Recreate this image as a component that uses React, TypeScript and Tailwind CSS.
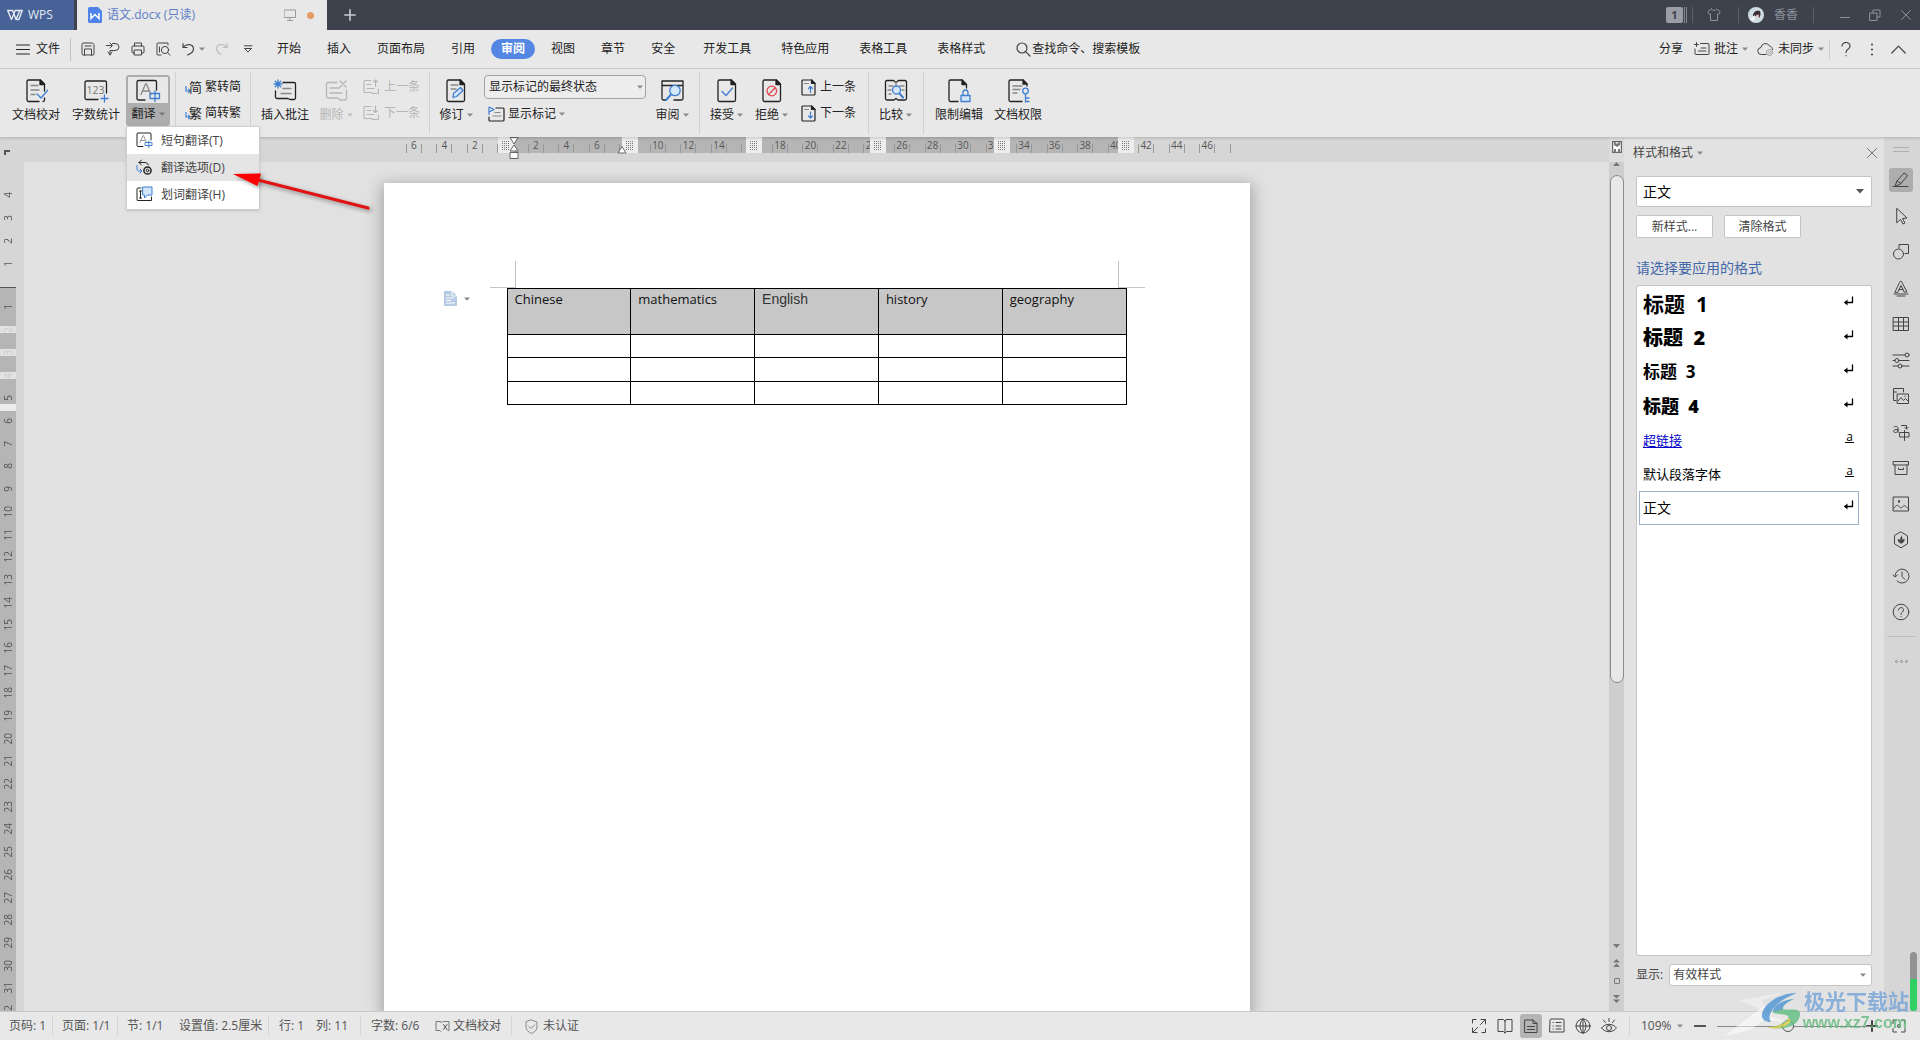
import type { ReactNode } from "react";

/* ---------- small building blocks ---------- */

type IconProps = { children: ReactNode; w?: number; h?: number; className?: string; sw?: number };

function Svg({ children, w = 24, h = 24, className = "", sw = 1 }: IconProps) {
  return (
    <svg
      width={w}
      height={h}
      viewBox={`0 0 ${w} ${h}`}
      fill="none"
      stroke="currentColor"
      strokeWidth={sw}
      strokeLinecap="round"
      strokeLinejoin="round"
      className={`shrink-0 ${className}`}
      aria-hidden="true"
    >
      {children}
    </svg>
  );
}

function Caret({ className = "text-[#8a8a8a]" }: { className?: string }) {
  return (
    <svg width="6" height="4" viewBox="0 0 6 4" className={`shrink-0 ${className}`} aria-hidden="true">
      <path d="M0 0.5h6L3 3.7z" fill="currentColor" />
    </svg>
  );
}

const BLUE = "#3f7fd0";
const PALE = "#d3e6fa";

function DocFrame({ open = false }: { open?: boolean }) {
  return (
    <>
      <path d={open ? "M12 23.500H4.500a1.500 1.500 0 0 1-1.500-1.500V3.500A1.500 1.500 0 0 1 4.500 2H16l4.500 4.500V10" : "M4.500 2H16.500L20.500 6V22a1.500 1.500 0 0 1-1.500 1.500H4.500A1.500 1.500 0 0 1 3 22V3.500A1.500 1.500 0 0 1 4.500 2z"} />
      <path d="M16 2l4.500 4.500H16z" fill="currentColor" />
    </>
  );
}

/* ---------- ribbon icons (24 x 25) ---------- */

const ProofIcon = () => (
  <Svg w={24} h={25} sw={1.3}>
    <path d="M15 23.500H4.500A1.500 1.500 0 0 1 3 22V3.500A1.500 1.500 0 0 1 4.500 2H16.500L20.500 6V13M20.500 20v2a1.500 1.500 0 0 1-1.500 1.500" />
    <path d="M16 2l4.500 4.500H16z" fill="currentColor" />
    <path d="M7 7.500h7M7 12h8M7 16.500h4" stroke="#888" />
    <path d="M13 16l4 4 7-8" stroke={BLUE} />
  </Svg>
);
const CountIcon = () => (
  <Svg w={26} h={25} sw={1.3}>
    <path d="M15 21.500H3.500A1.500 1.500 0 0 1 2 20V4.500A1.500 1.500 0 0 1 3.500 3H22a1.500 1.500 0 0 1 1.500 1.500V15" />
    <text x="12.500" y="16" textAnchor="middle" fontSize="10.500" fontFamily="Open Sans" fill="#777" stroke="none">123</text>
    <path d="M21.500 17v7M18 20.500h7" stroke={BLUE} />
  </Svg>
);
const TranslateIcon = () => (
  <Svg w={26} h={25} sw={1.3}>
    <path d="M10 22H3.500A1.500 1.500 0 0 1 2 20.500V4A1.500 1.500 0 0 1 3.500 2.500H20A1.500 1.500 0 0 1 21.500 4V12" />
    <path d="M6 16.500L10.500 6h1L16 16.500M7.500 13h7" stroke="#888" />
    <path d="M15 15.500h9.500v5H15zM20 13v10.500" stroke={BLUE} />
  </Svg>
);
const InsertCommentIcon = () => (
  <Svg w={26} h={25} sw={1.3}>
    <path d="M11 4.500H22A1.500 1.500 0 0 1 23.500 6V20A1.500 1.500 0 0 1 22 21.500H18l-2-1H5A1.500 1.500 0 0 1 3.500 19V13" />
    <path d="M11 10.500h8M9 15.500h10" stroke="#888" />
    <path d="M6 2v8M2 6h8M3.200 3.200l5.600 5.600M8.800 3.200L3.200 8.800" stroke={BLUE} />
  </Svg>
);
const DeleteCommentIcon = () => (
  <Svg w={26} h={25} sw={1.3}>
    <path d="M14 4.500H5A1.500 1.500 0 0 0 3.500 6V18.500A1.500 1.500 0 0 0 5 20h10l2 2h5a1.500 1.500 0 0 0 1.500-1.500V12M7 10h9M7 15h12M17 3l6 6M23 3l-6 6" />
  </Svg>
);
const ReviseIcon = () => (
  <Svg w={24} h={25} sw={1.3}>
    <DocFrame />
    <path d="M7 7h7M7 11h5" stroke="#888" />
    <path d="M9.500 15.500l7-6 2.500 3-6.500 6-3.500 1z" stroke={BLUE} fill={PALE} />
  </Svg>
);
const ReviewPaneIcon = () => (
  <Svg w={26} h={25} sw={1.3}>
    <path d="M7 22H4.500A1.500 1.500 0 0 1 3 20.500V3H24V20.500a1.500 1.500 0 0 1-1.500 1.500H15M3 7.500h21" />
    <circle cx="16" cy="12.500" r="5.200" stroke={BLUE} fill={PALE} />
    <path d="M12 16.500l-5 5.500" stroke={BLUE} strokeWidth="2" />
  </Svg>
);
const AcceptIcon = () => (
  <Svg w={24} h={25} sw={1.3}>
    <DocFrame />
    <path d="M7 13.500l4 4 6.500-7.500" stroke={BLUE} />
  </Svg>
);
const RejectIcon = () => (
  <Svg w={24} h={25} sw={1.3}>
    <DocFrame />
    <circle cx="11.800" cy="13" r="4.800" stroke="#e0464e" />
    <path d="M8.500 16.500l6.800-6.800" stroke="#e0464e" />
  </Svg>
);
const CompareIcon = () => (
  <Svg w={26} h={25} sw={1.3}>
    <path d="M10.500 2.500H4A1.500 1.500 0 0 0 2.500 4V20.500A1.500 1.500 0 0 0 4 22h7l2-1.500 2 1.500h7a1.500 1.500 0 0 0 1.500-1.500V4A1.500 1.500 0 0 0 22 2.500h-6.500L13 4.500z" />
    <path d="M13 4v3M6 8h4M5 12h3M17 8h4M19 12h2M6 16h2" stroke="#888" />
    <circle cx="13.500" cy="12" r="4" stroke={BLUE} fill={PALE} />
    <path d="M16.500 15.500l3.500 4" stroke={BLUE} strokeWidth="2" />
  </Svg>
);
const RestrictIcon = () => (
  <Svg w={26} h={25} sw={1.3}>
    <DocFrame open />
    <path d="M15 17.500h9v6h-9z" stroke={BLUE} fill={PALE} />
    <path d="M17 17v-2.500a2.500 2.500 0 0 1 5 0V17" stroke={BLUE} />
  </Svg>
);
const RightsIcon = () => (
  <Svg w={26} h={25} sw={1.3}>
    <path d="M17 23.500H5.500A1.500 1.500 0 0 1 4 22V3.500A1.500 1.500 0 0 1 5.500 2H18l4 4v2" />
    <path d="M18 2l4 4h-4z" fill="currentColor" />
    <path d="M8 8h9M8 11.500h7M8 15h4" stroke="#888" />
    <circle cx="20.500" cy="13" r="2.800" stroke={BLUE} />
    <path d="M20.500 16v8M20.500 20h3.500M20.500 23.500h3.500" stroke={BLUE} />
  </Svg>
);
const NavComment = ({ down }: { down?: boolean }) => (
  <Svg w={17} h={16} sw={1.1}>
    <path d="M8 1.500H2A1 1 0 0 0 1 2.500v10A1 1 0 0 0 2 13.500h6l2 1h4.500a1 1 0 0 0 1-1V10M4 5.500h4M4 9.500h7" />
    <path d={down ? "M12.500 1v6M10.500 5.500l2 2 2-2" : "M12.500 7.500v-6M10.500 3l2-2 2 2"} />
  </Svg>
);
const NavChange = ({ down }: { down?: boolean }) => (
  <Svg w={15} h={17} sw={1.2}>
    <path d="M2 1H10.500l3.500 3.500V15a1 1 0 0 1-1 1H2a1 1 0 0 1-1-1V2a1 1 0 0 1 1-1z" />
    <path d="M10.500 1v3.500H14z" fill="currentColor" />
    <path d="M3.500 4.500h4" stroke="#888" />
    <path d={down ? "M9.500 7v6M7.500 11l2 2 2-2" : "M9.500 13.500v-6M7.500 9.500l2-2 2 2"} stroke={BLUE} />
  </Svg>
);
const MarkupIcon = () => (
  <Svg w={17} h={16} sw={1.2}>
    <path d="M8 2h7a1 1 0 0 1 1 1v11a1 1 0 0 1-1 1H2a1 1 0 0 1-1-1v-3" />
    <path d="M1 8.500V1l5 2.500-5 2.500" stroke={BLUE} />
    <path d="M7 6.500h5M5 10h8" stroke="#888" />
  </Svg>
);
const ConvertIcon = ({ glyph }: { glyph: string }) => (
  <span className="flex w-4 items-end text-[#222]" aria-hidden="true">
    <svg width="6" height="10" viewBox="0 0 6 10" fill="none" stroke={BLUE} strokeWidth="1.200" className="shrink-0">
      <path d="M1 1v5h4M3.200 3.800L5.200 6 3.200 8.200" />
    </svg>
    <span className="-ml-0.5 text-[13px] leading-4">{glyph}</span>
  </span>
);

/* ---------- title bar ---------- */

function TitleBar() {
  return (
    <header className="flex h-[30px] shrink-0 items-stretch bg-[#3e424d] text-[#8c909a]">
      <button className="flex w-[74px] items-center gap-[5px] bg-[#476296] pl-[7px] text-[12px] text-[#e6ebf3]">
        <Svg w={16} h={12} sw={1.4}>
          <path d="M0.700 1.500h5L9 10.500 12.500 2.500M0.700 1.500L4.500 10.500 8.200 1.500H15.300L11.800 10.500h-1.500" />
        </Svg>
        WPS
      </button>
      <div className="ml-[3px] flex w-[250px] items-center bg-[#e8e8e8] pl-[11px] pr-[13px] text-[12px] text-[#5b80c6]">
        <svg width="14" height="16" viewBox="0 0 14 16" aria-hidden="true">
          <path d="M1.500 0H10l4 4v10.500a1.500 1.500 0 0 1-1.500 1.500h-11A1.500 1.500 0 0 1 0 14.500v-13A1.500 1.500 0 0 1 1.500 0z" fill="#4f83ea" />
          <path d="M3 6v5.500L7 7.500l4 4V6" fill="none" stroke="#fff" strokeWidth="1.500" />
        </svg>
        <span className="ml-[5px] flex-1">语文.docx (只读)</span>
        <Svg w={12} h={12} className="text-[#999]">
          <path d="M0.500 1h11v7.500H0.500zM6 8.500V11M3.500 11.500h5" />
        </Svg>
        <span className="ml-[11px] size-[7px] rounded-full bg-[#e39a63]" />
      </div>
      <button className="ml-[17px] flex items-center text-[#c9ccd3]" aria-label="新建标签">
        <Svg w={12} h={12} sw={1.6}>
          <path d="M6 0.800v10.400M0.800 6h10.400" />
        </Svg>
      </button>
      <div className="ml-auto flex items-center pr-2 text-[12px]">
        <span className="flex h-4 w-[17px] items-center justify-center rounded-[2px] bg-[#9a9da6] text-[11px] font-bold text-[#3e424d]">1</span>
        <span className="ml-px h-4 w-[3px] border-x border-[#82868f]" />
        <span className="ml-[5px] h-4 w-px bg-[#5b5f69]" />
        <button className="ml-[14px]" aria-label="皮肤">
          <Svg w={14} h={14}>
            <path d="M4.500 1L0.800 3.500l1.500 3L3.500 6v6.500h7V6l1.200.5 1.500-3L9.500 1C9 3 5 3 4.500 1z" />
          </Svg>
        </button>
        <span className="ml-[17px] h-4 w-px bg-[#5b5f69]" />
        <svg width="16" height="16" viewBox="0 0 16 16" className="ml-[9px]" aria-hidden="true">
          <circle cx="8" cy="8" r="8" fill="#cfdde2" />
          <path d="M5 9C5 5 8 3 12 4c1 3 .5 5-1 7-.5-2-1-2.500-2-3L6.500 9.500z" fill="#3a3038" />
          <path d="M8 8l3-.5-1 4z" fill="#e8b9ae" />
          <path d="M2 12l5-4-1 6z" fill="#f5fafb" />
        </svg>
        <span className="ml-[10px]">香香</span>
        <span className="ml-[15px] h-4 w-px bg-[#5b5f69]" />
        <button className="ml-[26px]" aria-label="最小化">
          <Svg w={10} h={12}><path d="M0.500 8.500h9" /></Svg>
        </button>
        <button className="ml-[19px]" aria-label="还原">
          <Svg w={12} h={12}><path d="M1 4h7v7.500H1zM4 4V1h7v7H8" /></Svg>
        </button>
        <button className="ml-[19px]" aria-label="关闭">
          <Svg w={12} h={12}><path d="M1.500 1.500l9 9M10.500 1.500l-9 9" /></Svg>
        </button>
      </div>
    </header>
  );
}

/* ---------- menu row ---------- */

const quickIcons: { label: string; el: ReactNode }[] = [
  { label: "保存", el: <Svg w={14} h={14}><path d="M1 2a1 1 0 0 1 1-1h9.500L13 2.500V12a1 1 0 0 1-1 1H2a1 1 0 0 1-1-1zM3.500 13V7h7v6M4 4h6" /></Svg> },
  { label: "输出为PDF", el: <Svg w={14} h={14}><path d="M0.500 3.500h5M4 1l2.500 2.500L4 6M6.500 1.500H9a4 3.500 0 0 1 0 7H4V13M2 10l2 3 2-3" /></Svg> },
  { label: "打印", el: <Svg w={14} h={14}><path d="M3.500 4V1h7v3M3.500 11H2a1 1 0 0 1-1-1V5a1 1 0 0 1 1-1h10a1 1 0 0 1 1 1v5a1 1 0 0 1-1 1h-1.500M3.500 8h7v5h-7z" /></Svg> },
  { label: "打印预览", el: <Svg w={15} h={14}><path d="M5 13H2a1 1 0 0 1-1-1V2a1 1 0 0 1 1-1h10v2M3.500 10V5" /><circle cx="9" cy="8" r="3.600" /><path d="M11.700 10.700L14 13.200" /></Svg> },
];

const tabs = ["开始", "插入", "页面布局", "引用", "审阅", "视图", "章节", "安全"];
const wideTabs = ["开发工具", "特色应用", "表格工具", "表格样式"];

function MenuRow() {
  return (
    <nav className="flex h-[39px] shrink-0 items-center border-b border-[#d0d0d0] pl-4 pr-[14px] text-[12px] text-[#222]">
      <button className="flex items-center gap-[6px]">
        <Svg w={14} h={11}><path d="M0.500 1h13M0.500 5.500h13M0.500 10h13" /></Svg>
        文件
      </button>
      <span className="ml-[10px] h-[23px] w-px bg-[#c4c4c4]" />
      <div className="ml-[10px] flex items-center gap-[11px] text-[#444]">
        {quickIcons.map((q) => (
          <button key={q.label} aria-label={q.label}>{q.el}</button>
        ))}
      </div>
      <button className="ml-[11px] flex items-center gap-1 text-[#444]" aria-label="撤销">
        <Svg w={13} h={14} sw={1.2}><path d="M1 1.500v4h4M1.500 5C4 1.500 11 1.500 11.500 6.500c0 3-3 5.500-6 6.500" /></Svg>
        <Caret />
      </button>
      <button className="ml-[10px] text-[#bcbcbc]" aria-label="恢复">
        <Svg w={13} h={14} sw={1.2}><path d="M12 1.500v4H8M11.500 5C9 1.500 2 1.500 1.500 6.500c0 3 3 5 4.500 6" /></Svg>
      </button>
      <button className="ml-4 text-[#444]" aria-label="自定义快速访问">
        <Svg w={9} h={8}><path d="M0.500 0.800h7.500M1 3.500h6.500L4.200 6.800z" /></Svg>
      </button>
      <div className="ml-[11px] flex items-center">
        {tabs.map((t) =>
          t === "审阅" ? (
            <button key={t} className="mx-[3px] h-5 rounded-full bg-[#5487e4] px-[10px] font-bold text-white">{t}</button>
          ) : (
            <button key={t} className="px-[13px]">{t}</button>
          ),
        )}
        {wideTabs.map((t) => (
          <button key={t} className="px-[15px]">{t}</button>
        ))}
      </div>
      <label className="ml-4 flex items-center gap-px">
        <Svg w={15} h={15} sw={1.2} className="text-[#444]"><circle cx="6" cy="6" r="5" /><path d="M9.800 9.800L14 14" /></Svg>
        <input className="w-[140px] bg-transparent outline-none placeholder:text-[#222] placeholder:opacity-100" placeholder="查找命令、搜索模板" />
      </label>
      <div className="ml-auto flex items-center">
        <button>分享</button>
        <button className="ml-[11px] flex items-center gap-1">
          <Svg w={16} h={14} className="text-[#444]"><path d="M6.500 1.500H14a1 1 0 0 1 1 1v9a1 1 0 0 1-1 1H2a1 1 0 0 1-1-1V7M2.500 0.500v4M0.500 2.500h4M7 6h5M4.500 9h7.500" /></Svg>
          批注
          <Caret />
        </button>
        <button className="ml-[9px] flex items-center gap-1">
          <Svg w={17} h={14} className="text-[#444]">
            <path d="M9 12.500H4.500a3.500 3.500 0 0 1-.5-7A4.500 4.500 0 0 1 12.500 4C14.500 4.500 15.500 6 15.500 7.500" />
            <circle cx="12.500" cy="10.500" r="3" stroke="#999" /><path d="M11.500 9.500l2 2M13.500 9.500l-2 2" stroke="#999" />
          </Svg>
          未同步
          <Caret />
        </button>
        <span className="ml-[5px] h-5 w-px bg-[#cccccc]" />
        <button className="ml-[11px] text-[#444]" aria-label="帮助">
          <Svg w={10} h={15} sw={1.2}><path d="M1 4a4 3.500 0 1 1 6.500 2.700C5.500 8 5 8.500 5 10.500M5 13.500v.2" /></Svg>
        </button>
        <button className="ml-[19px] text-[#444]" aria-label="更多">
          <Svg w={4} h={13} sw={2}><path d="M2 1.500v.1M2 6.500v.1M2 11.500v.1" /></Svg>
        </button>
        <button className="ml-[17px] text-[#444]" aria-label="折叠功能区">
          <Svg w={15} h={9} sw={1.2}><path d="M0.800 8L7.500 1.200 14.200 8" /></Svg>
        </button>
      </div>
    </nav>
  );
}

/* ---------- ribbon ---------- */

function Big({ icon, label, caret, className, muted }: { icon: ReactNode; label: string; caret?: boolean; className: string; muted?: boolean }) {
  return (
    <button className={`flex flex-col items-center gap-[3px] ${muted ? "text-[#b5b5b5]" : "text-[#222]"} ${className}`}>
      {icon}
      <span className="flex items-center gap-[3px] whitespace-nowrap leading-[18px]">
        {label}
        {caret && <Caret className={muted ? "text-[#c0c0c0]" : "text-[#8a8a8a]"} />}
      </span>
    </button>
  );
}

function Pair({ items, className }: { items: { icon: ReactNode; label: string }[]; className: string }) {
  return (
    <div className={`flex flex-col gap-2 ${className}`}>
      {items.map((i) => (
        <button key={i.label} className="flex h-[18px] items-center gap-1 whitespace-nowrap">
          {i.icon}
          {i.label}
        </button>
      ))}
    </div>
  );
}

const Sep = ({ className = "" }: { className?: string }) => <span className={`-mt-[6px] h-[62px] w-px shrink-0 bg-[#d2d2d2] ${className}`} />;

const menuItems: { label: string; el: ReactNode }[] = [
  { label: "短句翻译(T)", el: <Svg w={17} h={17}><path d="M7 14.500H2a1 1 0 0 1-1-1V2a1 1 0 0 1 1-1h12a1 1 0 0 1 1 1v6" stroke="#222" /><path d="M4 10.500L7 3.500h.5l3 7M5 8.500h4.500" stroke="#999" /><path d="M9.500 10.500h6.500v3H9.500zM12.800 8.800v7" stroke={BLUE} /></Svg> },
  { label: "翻译选项(D)", el: <Svg w={17} h={17}><path d="M3 3.500h6a4 3 0 0 1 3.500 2.500M5.500 1L3 3.500 5.500 6" stroke="#222" /><path d="M1 6.500v3.500c0 1.500 1 2 2.500 2h2M4 10l2 2-2 2" stroke={BLUE} /><circle cx="11.500" cy="11.500" r="3.600" stroke="#222" strokeWidth="1.500" /><circle cx="11.500" cy="11.500" r="1.300" stroke="#222" /></Svg> },
  { label: "划词翻译(H)", el: <Svg w={17} h={17}><path d="M15.500 11v3.500h-14a.5.5 0 0 1-.5-.5V3a1 1 0 0 1 1-1h3M3.500 5h2M4.500 5v7M3.500 12h2" stroke="#222" /><path d="M7 1h9v8H11.500L8.500 12V9H7z" stroke={BLUE} fill={PALE} /></Svg> },
];

function TranslateMenu() {
  return (
    <div role="menu" className="absolute left-0 top-[51px] z-20 w-[134px] border border-[#cfcfcf] bg-white pb-px shadow-sm">
      {menuItems.map((m, i) => (
        <button key={m.label} role="menuitem" className={`flex h-[27px] w-full items-center gap-2 pl-[9px] text-[12px] text-[#444] ${i === 1 ? "bg-[#e5e5e5]" : ""}`}>
          {m.el}
          {m.label}
        </button>
      ))}
      <svg width="150" height="50" viewBox="0 0 150 50" className="pointer-events-none absolute left-[102px] top-[43px] drop-shadow-[2px_2px_2px_rgba(0,0,0,0.4)]" aria-hidden="true">
        <path d="M29 10L139 38" stroke="#e01212" strokeWidth="3.200" strokeLinecap="round" />
        <path d="M4 4L32 3.500 28.500 16z" fill="#f00" />
      </svg>
    </div>
  );
}

function Ribbon() {
  return (
    <section className="relative z-10 flex h-[68px] shrink-0 items-start bg-[#e8e8e8] pl-[6px] pt-[9px] text-[12px] text-[#222] shadow-[0_1px_3px_rgba(0,0,0,0.18)]">
      <Big icon={<ProofIcon />} label="文档校对" className="w-[60px]" />
      <Big icon={<CountIcon />} label="字数统计" className="w-[60px]" />
      <div className="relative -mt-[3px]">
        <button className="flex h-[51px] w-[44px] flex-col items-center rounded-[3px] border-2 border-[#adadad] bg-[#e8e8e8]">
          <span className="flex h-[26px] items-center"><TranslateIcon /></span>
          <span className="flex w-full flex-1 items-center justify-center gap-[3px] bg-[#adadad]">
            翻译
            <Caret className="text-[#777]" />
          </span>
        </button>
        <TranslateMenu />
      </div>
      <Sep className="ml-[5px]" />
      <Pair className="ml-[9px]" items={[{ icon: <ConvertIcon glyph="简" />, label: "繁转简" }, { icon: <ConvertIcon glyph="繁" />, label: "简转繁" }]} />
      <Sep className="ml-[9px]" />
      <Big icon={<InsertCommentIcon />} label="插入批注" className="ml-1 w-[60px]" />
      <Big icon={<DeleteCommentIcon />} label="删除" caret muted className="w-[42px]" />
      <Pair className="ml-[6px] text-[#b5b5b5]" items={[{ icon: <NavComment />, label: "上一条" }, { icon: <NavComment down />, label: "下一条" }]} />
      <Sep className="ml-[9px]" />
      <Big icon={<ReviseIcon />} label="修订" caret className="ml-[6px] w-10" />
      <div className="-mt-[3px] ml-2 flex w-[162px] flex-col gap-[6px]">
        <span className="relative flex h-6 items-center">
          <select aria-label="显示标记的状态" className="h-full w-full appearance-none rounded-[4px] border border-[#a3a3a3] bg-[#ededed] pl-1 text-[12px] outline-none">
            <option>显示标记的最终状态</option>
          </select>
          <span className="pointer-events-none absolute right-[3px]"><Caret /></span>
        </span>
        <button className="ml-1 flex h-[18px] items-center gap-[3px]">
          <MarkupIcon />
          显示标记
          <Caret />
        </button>
      </div>
      <Big icon={<ReviewPaneIcon />} label="审阅" caret className="ml-[6px] w-10" />
      <Sep className="ml-[7px]" />
      <Big icon={<AcceptIcon />} label="接受" caret className="ml-1 w-[45px]" />
      <Big icon={<RejectIcon />} label="拒绝" caret className="w-[45px]" />
      <Pair className="ml-[7px]" items={[{ icon: <NavChange />, label: "上一条" }, { icon: <NavChange down />, label: "下一条" }]} />
      <Sep className="ml-3" />
      <Big icon={<CompareIcon />} label="比较" caret className="ml-1 w-[45px]" />
      <Sep className="ml-[5px]" />
      <Big icon={<RestrictIcon />} label="限制编辑" className="ml-[5px] w-[60px]" />
      <Big icon={<RightsIcon />} label="文档权限" className="w-[58px]" />
    </section>
  );
}

/* ---------- rulers ---------- */

const hNumbers = Array.from({ length: 27 }, (_, i) => (i - 3) * 2);
const hiddenNumbers = [0, 8, 16];

function ColumnGrip() {
  return (
    <span className="flex h-4 w-4 shrink-0 items-center justify-center bg-[#ededed]">
      <svg width="8" height="9" viewBox="0 0 8 9" stroke="#777" strokeDasharray="1 1" aria-hidden="true">
        <path d="M0 .5h8M0 2.500h8M0 4.500h8M0 6.500h8M0 8.500h8" />
      </svg>
    </span>
  );
}

function HorizontalRuler() {
  return (
    <div className="h-[25px] shrink-0 bg-[#d6d6d6]">
      <div className="relative mx-auto h-4 w-[866px]">
        <div className="flex h-full pl-[114px]">
          <ColumnGrip />
          {[0, 1, 2, 3, 4].map((c) => (
            <span key={c} className="h-full w-[124px] bg-[#b5b5b5]" />
          ))}
        </div>
        <div className="absolute inset-0 flex items-end pl-[15px] text-[10px] leading-4 text-[#555]">
          <span className="flex w-[824px] shrink-0">
            {hNumbers.map((n) => (
              <span key={n} className="flex flex-1 items-end justify-center">
                <span className="h-[9px] w-px bg-[#999]" />
                <span className="flex h-4 w-[14px] justify-center">{hiddenNumbers.includes(n) ? "" : Math.abs(n)}</span>
                <span className="h-[9px] w-px bg-[#999]" />
              </span>
            ))}
          </span>
          <span className="ml-[7px] h-[9px] w-px bg-[#999]" />
        </div>
        <div className="absolute inset-0 flex pl-[114px]">
          <ColumnGrip />
          {[0, 1, 2, 3, 4].map((c) => (
            <span key={c} className="flex w-[124px] justify-end"><ColumnGrip /></span>
          ))}
        </div>
        <svg width="10" height="22" viewBox="0 0 10 22" className="absolute left-[125px] top-0" fill="#fff" stroke="#666" aria-hidden="true">
          <path d="M1 .5h8L5 7zM5 8l4 6H1zM1 15.500h8v6H1z" />
        </svg>
        <svg width="10" height="8" viewBox="0 0 10 8" className="absolute left-[233px] top-[9px]" fill="#fff" stroke="#666" aria-hidden="true">
          <path d="M5 .5l4 6.500H1z" />
        </svg>
      </div>
    </div>
  );
}

const below = Array.from({ length: 32 }, (_, i) => i + 1);

function VerticalRuler() {
  return (
    <div className="flex w-6 shrink-0 flex-col overflow-hidden bg-[#d6d6d6] text-[10px] leading-4 text-[#555]">
      <div className="flex h-[46px] shrink-0 items-start justify-start pl-1 pt-[13px]">
        <svg width="6" height="5" viewBox="0 0 6 5" stroke="#555" strokeWidth="2" fill="none" aria-hidden="true"><path d="M1 5V1h5" /></svg>
      </div>
      <div className="flex h-[92px] shrink-0 flex-col">
        {[4, 3, 2, 1].map((n) => (
          <span key={n} className="flex flex-1 items-center pr-2"><span className="rotate-180 [writing-mode:vertical-rl]">{n}</span></span>
        ))}
      </div>
      <div className="relative mt-3 min-h-0 w-4 flex-1 border-t border-[#555] bg-[#b5b5b5]">
        <div className="flex h-[734px] w-4 flex-col pt-2">
          {below.map((n) => (
            <span key={n} className="flex flex-1 items-center"><span className="rotate-180 [writing-mode:vertical-rl]">{n}</span></span>
          ))}
        </div>
        <div className="absolute left-0 top-[38px] flex flex-col gap-4">
          <span className="h-[7px] w-4 bg-[#f2f2f2]/75" />
          <span className="h-[7px] w-4 bg-[#f2f2f2]/75" />
          <span className="h-[7px] w-4 bg-[#f2f2f2]/75" />
        </div>
        <span className="absolute left-0 top-[116px] h-[7px] w-4 bg-[#ececec]" />
      </div>
    </div>
  );
}

/* ---------- document ---------- */

const headers = ["Chinese", "mathematics", "English", "history", "geography"];

function Page() {
  return (
    <main className="mx-auto mt-[21px] min-h-0 w-[866px] flex-1 overflow-visible bg-white pt-[78px] shadow-[0_4px_14px_3px_rgba(0,0,0,0.25)]">
      <div className="ml-[106px] flex w-[655px] justify-between">
        <span className="h-[27px] w-[26px] border-b border-r border-[#c3c3c3]" />
        <span className="h-[27px] w-[27px] border-b border-l border-[#c3c3c3]" />
      </div>
      <div className="flex items-start">
        <button className="ml-[60px] mt-[3px] flex w-[63px] items-center gap-[7px]" aria-label="粘贴选项">
          <svg width="13" height="15" viewBox="0 0 13 15" aria-hidden="true">
            <path d="M0 0h8l5 5v10H0z" fill="#b7cae4" />
            <path d="M2 4h4M2 7h8M2 9.500h5M2 12h9M8 0v5h5" stroke="#fff" fill="none" />
          </svg>
          <Caret />
        </button>
        <table className="w-[620px] table-fixed border-collapse text-left text-[13px] leading-4 text-[#111]">
          <thead>
            <tr className="h-[46px] bg-[#c7c7c7]">
              {headers.map((h) => (
                <th key={h} className={`border border-black px-[7px] pt-[2px] align-top font-normal ${h === "English" ? "font-['Liberation_Sans'] text-[14px] text-[#333]" : ""}`}>{h}</th>
              ))}
            </tr>
          </thead>
          <tbody>
            {["h-[23px]", "h-6", "h-[23px]"].map((height, r) => (
              <tr key={r} className={height}>
                {headers.map((h) => (
                  <td key={h} className="border border-black" />
                ))}
              </tr>
            ))}
          </tbody>
        </table>
      </div>
    </main>
  );
}

function VerticalScroll() {
  return (
    <div className="flex w-[15px] shrink-0 flex-col items-center bg-[#cecece] text-[#777]">
      <div className="flex h-[25px] w-full items-start justify-center bg-[#dcdcdc] pt-1">
        <svg width="10" height="12" viewBox="0 0 10 12" aria-hidden="true">
          <rect x=".5" y=".5" width="9" height="11" rx="1" fill="#fff" stroke="#666" strokeWidth="1.500" />
          <path d="M2 1h1l2 2 2-2h1v3L5 6 2 4zM2 11V8h2v3zM6 11V8h2v3z" fill="#777" />
        </svg>
      </div>
      <svg width="7" height="4" viewBox="0 0 7 4" aria-hidden="true"><path d="M0 4h7L3.500 0z" fill="currentColor" /></svg>
      <span className="mt-[9px] h-[508px] w-[14px] rounded-full border border-[#8b8b8b] bg-[#e8e8e8]" />
      <div className="mt-auto flex flex-col items-center gap-[11px] pb-2">
        <svg width="7" height="4" viewBox="0 0 7 4" aria-hidden="true"><path d="M0 0h7L3.500 4z" fill="currentColor" /></svg>
        <svg width="7" height="8" viewBox="0 0 7 8" aria-hidden="true"><path d="M0 3.500h7L3.500 0zM0 8h7L3.500 4.500z" fill="currentColor" /></svg>
        <span className="size-[6px] rounded-[1px] border border-[#777]" />
        <svg width="7" height="8" viewBox="0 0 7 8" aria-hidden="true"><path d="M0 0h7L3.500 3.500zM0 4.500h7L3.500 8z" fill="currentColor" /></svg>
      </div>
    </div>
  );
}

/* ---------- styles panel ---------- */

const styleRows = [
  { label: "标题 1", cls: "text-[21px] font-bold", kind: "p" },
  { label: "标题 2", cls: "text-[20px] font-black", kind: "p" },
  { label: "标题 3", cls: "text-[17px] font-bold", kind: "p" },
  { label: "标题 4", cls: "text-[18px] font-black", kind: "p" },
  { label: "超链接", cls: "text-[13px] text-[#0000c8] underline underline-offset-2", kind: "a" },
  { label: "默认段落字体", cls: "text-[13px]", kind: "a" },
  { label: "正文", cls: "text-[14px]", kind: "p", active: true },
];

function StylesPanel() {
  return (
    <aside className="flex w-[260px] shrink-0 flex-col bg-[#e2e2e2] pb-[25px] pl-3 pr-3 pt-2 text-[12px] text-[#444]">
      <div className="flex h-4 items-center">
        <button className="-ml-[3px] flex items-center gap-1">样式和格式 <Caret /></button>
        <button className="ml-auto mr-[-5px]" aria-label="关闭面板">
          <Svg w={10} h={10} className="text-[#777]"><path d="M.5.500l9 9M9.500.500l-9 9" /></Svg>
        </button>
      </div>
      <span className="relative mt-[15px] flex h-[31px] items-center">
        <select aria-label="当前样式" className="h-full w-full appearance-none rounded-[2px] border border-[#c4c4c4] bg-white pl-[6px] text-[14px] text-black outline-none">
          <option>正文</option>
        </select>
        <svg width="8" height="5" viewBox="0 0 8 5" className="pointer-events-none absolute right-[8px]" aria-hidden="true"><path d="M0 0h8L4 4.500z" fill="#555" /></svg>
      </span>
      <div className="mt-[8px] flex gap-[11px]">
        <button className="h-[23px] w-[77px] rounded-[2px] border border-[#c4c4c4] bg-white">新样式...</button>
        <button className="h-[23px] w-[77px] rounded-[2px] border border-[#c4c4c4] bg-white">清除格式</button>
      </div>
      <p className="mt-5 text-[14px] leading-5 text-[#4468a8]">请选择要应用的格式</p>
      <ul className="mt-[7px] flex-1 rounded-[3px] border border-[#c4c4c4] bg-white px-[2px] pt-px text-black">
        {styleRows.map((s) => (
          <li key={s.label}>
            <button className={`flex h-[34px] w-[220px] items-center border pl-[3px] pr-1 text-left ${s.active ? "border-[#9fb0c9]" : "border-transparent"}`}>
              <span className={`flex-1 whitespace-pre leading-6 ${s.cls}`}>{s.label.replace(" ", "  ")}</span>
              {s.kind === "p" ? (
                <Svg w={11} h={10} sw={1.3} className="mb-[6px]"><path d="M9.500 1v5.500H2" /><path d="M4.500 3.500v6L1 6.500z" fill="currentColor" stroke="none" /></Svg>
              ) : (
                <span className="mb-[6px] w-[9px] border-b border-black text-center text-[12px] leading-[10px]">a</span>
              )}
            </button>
          </li>
        ))}
      </ul>
      <label className="mt-2 flex h-[22px] items-center gap-[6px]">
        <span className="whitespace-nowrap">显示:</span>
        <span className="relative flex h-full flex-1 items-center">
          <select className="h-full w-full appearance-none rounded-[3px] border border-[#c4c4c4] bg-white pl-[3px] text-[12px] outline-none">
            <option>有效样式</option>
          </select>
          <span className="pointer-events-none absolute right-[6px]"><Caret /></span>
        </span>
      </label>
    </aside>
  );
}

const sideIcons: { label: string; el: ReactNode }[] = [
  { label: "选择", el: <path d="M5 1.500l10 9.500-4.500.500 2.500 4.500-2 1L8.500 12.500 5 15.500z" /> },
  { label: "形状", el: <><path d="M7 5V1.500h9.500v9H13" /><circle cx="6.500" cy="11" r="5" /></> },
  { label: "艺术字", el: <path d="M3 13L7.500 3.500a1.200 1.200 0 0 1 2.500 0L15 13H12L9 6.500 6 13zM7 10.500h4M2 15h14M5 17h8" /> },
  { label: "表格", el: <path d="M1.500 2.500h15v13h-15zM1.500 7h15M1.500 11h15M6.500 2.500v13M11.500 2.500v13" /> },
  { label: "设置", el: <><path d="M1 4h12M1 9.500h2M7 9.500h10M1 15h5M10 15h7" /><circle cx="15" cy="4" r="2" /><circle cx="5" cy="9.500" r="2" /><circle cx="8" cy="15" r="2" /></> },
  { label: "图库", el: <><path d="M4 13.500H1.500v-12h10V5M1.500 5h3M5.500 7h11v9.500h-11zM6 14l3-3.500 2.500 3 2-2 3 3" /><path d="M13 9v.5" /></> },
  { label: "翻译", el: <><path d="M2 4c2-1.500 4-.5 4 1.500v4M6 6.500c-5.500-.5-5.500 3-2.500 3 1.500 0 2.500-1 2.500-2M9.500 2.500h5V6M13 4.500L14.500 6 16 4.500M8 9.500h9v4.500H8zM12.500 7.500v10" /></> },
  { label: "归档", el: <path d="M1.500 2.500h15V6h-15zM3 6v9.500h12V6M6.500 9v1.500h5V9" /> },
  { label: "图片", el: <><path d="M1.500 2h15v14h-15zM2 13c3-4 4-3 5.500-1 1.500 2 2.500 0 4-1s3 1 5 3" /><path d="M7 6v.8" strokeWidth="2" /></> },
  { label: "推荐", el: <><path d="M9 1l6.500 3.800v8L9 16.800 2.500 12.800v-8z" /><path d="M9.500 5c1.500 2 .5 4 0 5 .5-1 1.500-2 3-2 0 2.500-1.500 4-3.500 4.500C7 12 5.500 10 6 8c1.500.5 2 1 2.500 2C8 8 8.500 6.500 9.500 5z" fill="currentColor" strokeWidth=".3" /></> },
  { label: "历史", el: <path d="M3 9a7 7 0 1 1 2 5M1 8l2 2 2.500-2M10 5v4.500l3 3" /> },
  { label: "帮助", el: <><circle cx="9" cy="9" r="7.800" /><path d="M6.500 7a2.500 2.500 0 1 1 4 2C9 10 9 10.500 9 11.500M9 13.500v.2" /></> },
];

function SideBar() {
  return (
    <div className="flex w-9 shrink-0 flex-col items-center gap-3 bg-[#d6d6d6] pr-0.5 pt-[10px] text-[#444]">
      <span className="h-[5px] w-4 border-y border-[#b0b0b0]" />
      <button className="mt-[4px] flex size-6 items-center justify-center rounded-[3px] bg-[#adadad]" aria-label="样式和格式">
        <Svg w={18} h={18}><path d="M1 15.500h15M3 15l2-5L12 2l3.500 2.500L9 12.500zM5 10l4 2.500" /></Svg>
      </button>
      {sideIcons.map((s) => (
        <button key={s.label} className="flex size-6 items-center justify-center" aria-label={s.label}>
          <Svg w={18} h={18}>{s.el}</Svg>
        </button>
      ))}
      <span className="h-px w-7 bg-[#bfbfbf]" />
      <button className="mt-[11px] flex gap-[2px]" aria-label="更多">
        <span className="size-[3px] rounded-full border border-[#888]" />
        <span className="size-[3px] rounded-full border border-[#888]" />
        <span className="size-[3px] rounded-full border border-[#888]" />
      </button>
    </div>
  );
}

/* ---------- status bar ---------- */

const viewButtons: { label: string; active?: boolean; el: ReactNode }[] = [
  { label: "全屏", el: <path d="M10 1.500h4.500V6M14 2L9.500 6.500M6 14.500H1.500V10M2 14l4.500-4.500M1.500 5V1.500H5M14.500 11v3.500H11" /> },
  { label: "阅读", el: <path d="M8 3L6.500 1.500H1v12h5.500L8 15l1.500-1.500H15v-12H9.500zM8 3v12" /> },
  { label: "页面", active: true, el: <path d="M2 2h8l4 3.500V14.500H2zM10 2v3.500h4M4.500 8.500h7M4.500 11.500h7" /> },
  { label: "大纲", el: <path d="M1 2a1 1 0 0 1 1-1h12a1 1 0 0 1 1 1v12H1zM4 4.500h.3M7 4.500h5M4 8h.3M7 8h5M4 11h.3M7 11h5" /> },
  { label: "Web", el: <><circle cx="8" cy="8" r="7" /><path d="M1 8h14M8 1v14M8 1c-4 4-4 10 0 14M8 1c4 4 4 10 0 14" /></> },
  { label: "护眼", el: <><path d="M.500 10c4-5 11-5 15 0-4 5-11 5-15 0zM8 .500v3M2.500 2l2 2.500M13.500 2l-2 2.500" /><circle cx="8" cy="10" r="2.500" /></> },
];

const StatusSep = ({ className = "" }: { className?: string }) => <span className={`h-5 w-px bg-[#d6d6d6] ${className}`} />;

function StatusBar() {
  return (
    <footer className="flex h-[29px] shrink-0 items-center border-t border-[#c9c9c9] bg-[#e8e8e8] pl-[9px] pr-[14px] text-[12px] text-[#555]">
      <span className="w-[43px]">页码: 1</span>
      <StatusSep />
      <span className="w-[64px] pl-[9px]">页面: 1/1</span>
      <StatusSep />
      <span className="w-[61px] pl-[9px]">节: 1/1</span>
      <span className="w-[89px]">设置值: 2.5厘米</span>
      <StatusSep />
      <span className="w-[47px] pl-[10px]">行: 1</span>
      <span className="w-[44px]">列: 11</span>
      <StatusSep />
      <span className="w-[65px] pl-[10px]">字数: 6/6</span>
      <button className="flex items-center gap-[3px] pl-[9px] pr-[10px]">
        <Svg w={15} h={13}><path d="M6 11.500L5 10.500H1v-9h4l2 1 1-1h6v9H13" stroke="#777" /><path d="M8.500 4.500l3.500 5M12 4.500l-3.500 5" /></Svg>
        文档校对
      </button>
      <StatusSep />
      <button className="flex items-center gap-[5px] pl-[13px]">
        <Svg w={13} h={15} className="text-[#888]"><path d="M6.500 1l5.500 2v5c0 3-2.500 5-5.500 6.500C3.500 13 1 11 1 8V3zM4 7.500l2 2L9.500 6" /></Svg>
        未认证
      </button>
      <div className="ml-auto flex items-center gap-1 text-[#444]">
        {viewButtons.map((v) => (
          <button key={v.label} aria-label={v.label} className={`flex h-6 w-[22px] items-center justify-center rounded-[3px] ${v.active ? "bg-[#b5b5b5]" : ""}`}>
            <Svg w={16} h={16}>{v.el}</Svg>
          </button>
        ))}
      </div>
      <StatusSep className="ml-[9px]" />
      <button className="ml-[11px] flex w-[42px] items-center justify-between">109% <Caret /></button>
      <button className="ml-[11px] h-[2px] w-3 bg-[#555]" aria-label="缩小" />
      <label className="relative ml-[11px] flex h-4 w-[153px] items-center">
        <span className="h-px w-full bg-[#888]" />
        <input
          type="range"
          aria-label="缩放"
          min={0}
          max={100}
          defaultValue={46}
          className="absolute inset-0 w-full appearance-none bg-transparent [&::-webkit-slider-thumb]:size-3 [&::-webkit-slider-thumb]:appearance-none [&::-webkit-slider-thumb]:rounded-full [&::-webkit-slider-thumb]:border [&::-webkit-slider-thumb]:border-[#555] [&::-webkit-slider-thumb]:bg-[#e8e8e8]"
        />
      </label>
      <button className="ml-[-4px] text-[#444]" aria-label="放大">
        <Svg w={12} h={12} sw={2}><path d="M6 1v10M1 6h10" /></Svg>
      </button>
      <button className="ml-[14px] text-[#444]" aria-label="适应页面">
        <Svg w={14} h={14}><path d="M1 4.500V1h3.500M9.500 1H13v3.500M13 9.500V13H9.500M4.500 13H1V9.500" /><circle cx="7" cy="7" r="1.500" /></Svg>
      </button>
    </footer>
  );
}

/* Site mark laid over the lower right corner. */
function SiteMark() {
  return (
    <div className="pointer-events-none absolute bottom-0 right-0 z-30 flex h-[88px] w-[200px] items-end justify-end">
      <svg width="180" height="54" viewBox="0 0 180 54" className="absolute bottom-0 left-0" aria-hidden="true">
        <path d="M4 50L52 14 42 28 68 36 44 34 30 44z" fill="#fff" opacity=".5" />
        <path d="M20 14l26 12-4-12 20-7-22 4z" fill="#fff" opacity=".4" />
      </svg>
      <svg width="42" height="40" viewBox="0 0 42 40" className="absolute bottom-[9px] left-[40px] opacity-80" aria-hidden="true">
        <path d="M37 2C20 2 4 12 2 23c-1 5 3 8 9 8-5-6 2-20 26-29z" fill="#4d94d3" />
        <path d="M34 8C22 9 13 16 13 21c1 3 11 1 15 4 2 4-8 11-20 11 18 5 33-3 32-14-1-6-13-2-17-4-1-3 4-7 11-10z" fill="#5ebd80" />
        <path d="M13 21c0-6 8-12 21-13-7 3-12 7-11 10z" fill="#4d94d3" />
        <path d="M28 26c1 5-8 10-20 10 8 4 20-1 23-6z" fill="#d8d044" />
      </svg>
      <div className="flex flex-col items-end whitespace-nowrap pb-[7px] pr-[11px] opacity-80">
        <span className="text-[21px] font-bold leading-6 text-[#75a3d8]">极光下载站</span>
        <span className="pr-[2px] font-['Liberation_Sans'] text-[16px] font-bold leading-5 text-[#66b97e]">www.xz7.com</span>
      </div>
      <span className="absolute right-[3px] top-0 flex h-[59px] w-[7px] flex-col overflow-hidden rounded-full bg-[#929292]">
        <span className="mt-auto h-8 bg-[#30d065]" />
      </span>
    </div>
  );
}

export default function App() {
  return (
    <div className="relative flex h-screen flex-col overflow-hidden bg-[#e8e8e8] font-['Open_Sans','Noto_Sans_CJK_SC',sans-serif]">
      <TitleBar />
      <MenuRow />
      <Ribbon />
      <div className="flex min-h-0 flex-1">
        <VerticalRuler />
        <div className="flex min-w-0 flex-1 flex-col overflow-hidden bg-[#e1e1e1]">
          <HorizontalRuler />
          <Page />
        </div>
        <VerticalScroll />
        <StylesPanel />
        <SideBar />
      </div>
      <StatusBar />
      <SiteMark />
    </div>
  );
}
